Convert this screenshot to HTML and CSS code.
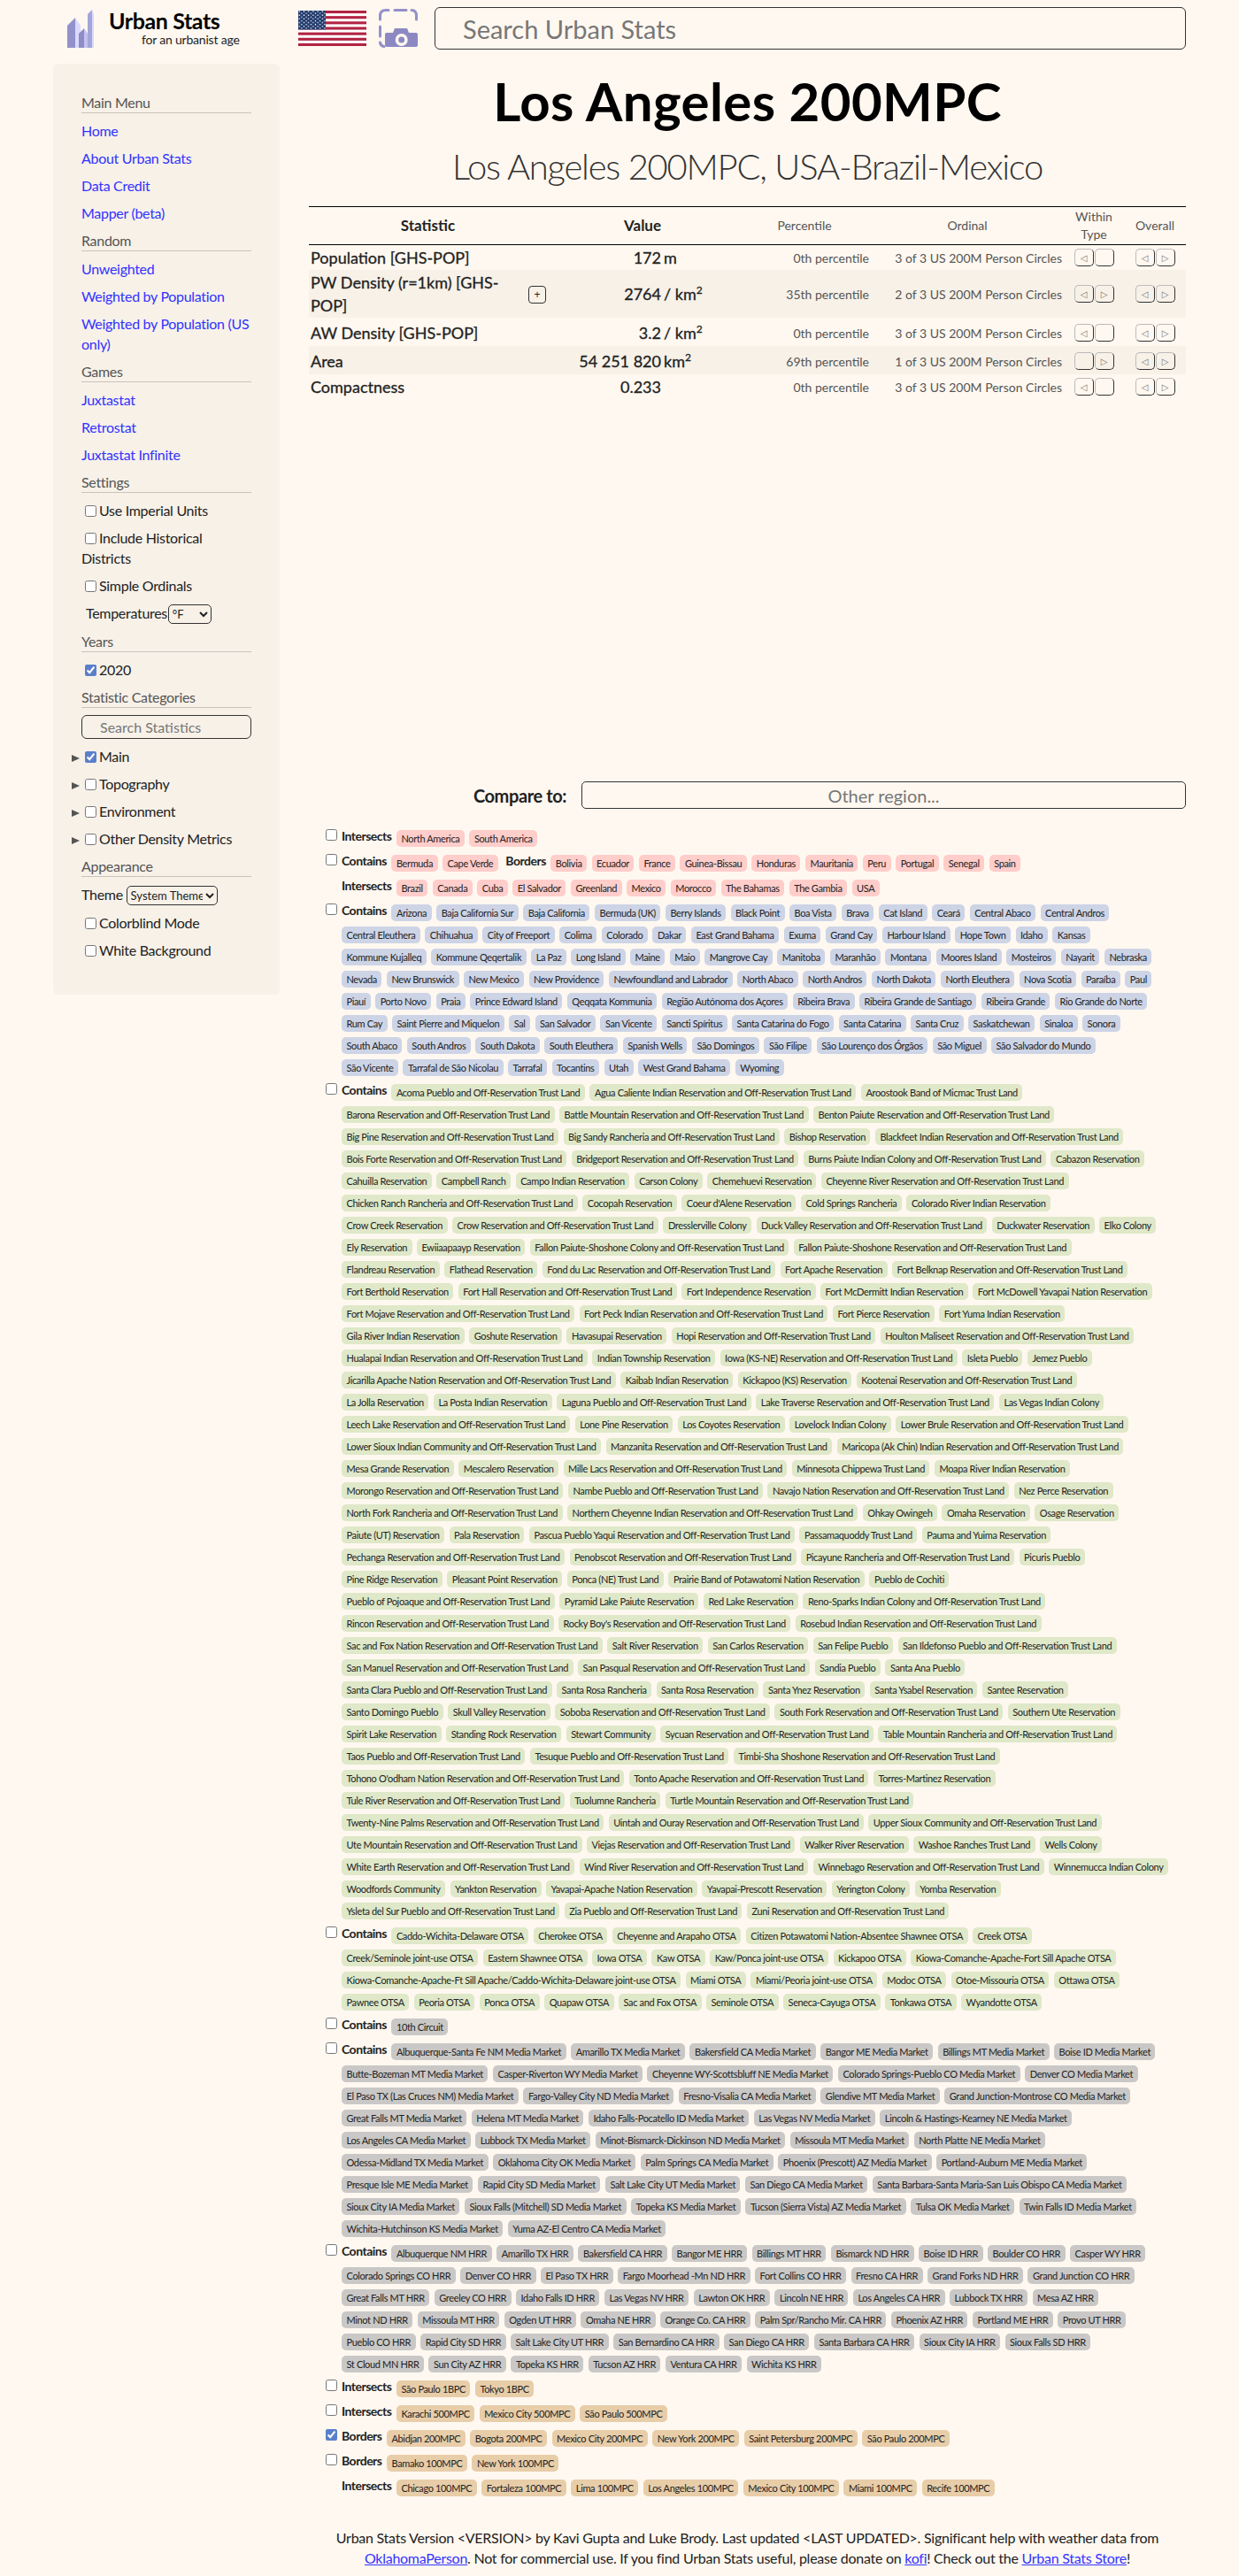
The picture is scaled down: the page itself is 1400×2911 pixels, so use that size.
FILE: index.html
```html
<!DOCTYPE html>
<html lang="en">
<head>
    <meta charset="UTF-8">
    <title>Los Angeles 200MPC - Urban Stats</title>
    <link rel="stylesheet" href="styles.css">
</head>
<body>

<div class="page">
    <!-- Top bar -->
    <div class="top">
        <svg class="logo" viewBox="0 0 31 43" width="31" height="43">
            <polygon points="0,18 9,9 9,43 0,43" fill="#9391cb"/>
            <polygon points="9,9 15,18 15,43 9,43" fill="#d9d9fd"/>
            <polygon points="13,27 19,21 19,43 13,43" fill="#8f8dc6"/>
            <polygon points="19,21 23,27 23,43 19,43" fill="#c3c2f0"/>
            <polygon points="23,5 28,0 28,43 23,43" fill="#a6a5da"/>
            <polygon points="28,0 30,5 30,43 28,43" fill="#d9d9fd"/>
        </svg>
        <div class="brand">
            <div class="brand-name">Urban Stats</div>
            <div class="brand-tag">for an urbanist age</div>
        </div>
        <svg class="flag" viewBox="0 0 77 40" width="77" height="40">
            <defs>
                <pattern id="stars" width="5.2" height="4.2" patternUnits="userSpaceOnUse">
                    <circle cx="1.3" cy="1" r="0.7" fill="#fff"/>
                    <circle cx="3.9" cy="3.1" r="0.7" fill="#fff"/>
                </pattern>
            </defs>
            <rect width="77" height="40" fill="#fff"/>
            <rect y="0" width="77" height="3.08" fill="#b22242"/>
            <rect y="6.15" width="77" height="3.08" fill="#b22242"/>
            <rect y="12.3" width="77" height="3.08" fill="#b22242"/>
            <rect y="18.46" width="77" height="3.08" fill="#b22242"/>
            <rect y="24.6" width="77" height="3.08" fill="#b22242"/>
            <rect y="30.77" width="77" height="3.08" fill="#b22242"/>
            <rect y="36.92" width="77" height="3.08" fill="#b22242"/>
            <rect width="31" height="21.5" fill="#213a6d"/>
            <rect width="31" height="21.5" fill="url(#stars)"/>
        </svg>
        <svg class="camera" viewBox="0 0 45 44" width="45" height="44">
            <g fill="none" stroke="#9390c8" stroke-width="3" stroke-linecap="round">
                <path d="M1.5 12V8Q1.5 1.5 8 1.5H11"/>
                <path d="M18 1.5H31"/>
                <path d="M37 1.5Q42.5 1.5 42.5 8V12"/>
                <path d="M1.5 20V31"/>
                <path d="M1.5 38Q2 42 6 42.5"/>
            </g>
            <path d="M9 27H16L18 22H32L34 27H42Q44 27 44 29V41Q44 43 42 43H9Q7 43 7 41V29Q7 27 9 27Z" fill="#8c89c2"/>
            <circle cx="25.7" cy="35" r="7" fill="#fff8f0"/>
            <circle cx="25.7" cy="35" r="3.5" fill="#8c89c2"/>
        </svg>
        <input class="search" type="text" placeholder="Search Urban Stats">
    </div>

    <div class="layout">
        <!-- Sidebar -->
        <div class="sidebar">
            <div class="side-head">Main Menu</div>
            <div class="side-item"><a href="#">Home</a></div>
            <div class="side-item"><a href="#">About Urban Stats</a></div>
            <div class="side-item"><a href="#">Data Credit</a></div>
            <div class="side-item"><a href="#">Mapper (beta)</a></div>
            <div class="side-head">Random</div>
            <div class="side-item"><a href="#">Unweighted</a></div>
            <div class="side-item"><a href="#">Weighted by Population</a></div>
            <div class="side-item"><a href="#">Weighted by Population (US only)</a></div>
            <div class="side-head">Games</div>
            <div class="side-item"><a href="#">Juxtastat</a></div>
            <div class="side-item"><a href="#">Retrostat</a></div>
            <div class="side-item"><a href="#">Juxtastat Infinite</a></div>
            <div class="side-head">Settings</div>
            <div class="side-item"><input type="checkbox"><label>Use Imperial Units</label></div>
            <div class="side-item"><input type="checkbox"><label>Include Historical Districts</label></div>
            <div class="side-item"><input type="checkbox"><label>Simple Ordinals</label></div>
            <div class="side-item indent"><label>Temperatures</label> <select class="temp"><option>°F</option></select></div>
            <div class="side-head">Years</div>
            <div class="side-item"><input type="checkbox" checked><label>2020</label></div>
            <div class="side-head">Statistic Categories</div>
            <input class="stat-search" type="text" placeholder="Search Statistics">
            <div class="side-item"><span class="arrow"></span><input type="checkbox" checked><label>Main</label></div>
            <div class="side-item"><span class="arrow"></span><input type="checkbox"><label>Topography</label></div>
            <div class="side-item"><span class="arrow"></span><input type="checkbox"><label>Environment</label></div>
            <div class="side-item"><span class="arrow"></span><input type="checkbox"><label>Other Density Metrics</label></div>
            <div class="side-head">Appearance</div>
            <div class="side-item"><label>Theme</label> <select class="theme"><option>System Theme</option></select></div>
            <div class="side-item"><input type="checkbox"><label>Colorblind Mode</label></div>
            <div class="side-item"><input type="checkbox"><label>White Background</label></div>
        </div>

        <!-- Main column -->
        <div class="main">
            <h1>Los Angeles 200MPC</h1>
            <h2>Los Angeles 200MPC, USA-Brazil-Mexico</h2>

            <table class="stats">
                <colgroup>
                    <col class="c-name"><col class="c-btn"><col class="c-num"><col class="c-unit">
                    <col class="c-pct"><col class="c-ord"><col class="c-within"><col class="c-over">
                </colgroup>
                <tr class="head">
                    <th colspan="2">Statistic</th>
                    <th colspan="2">Value</th>
                    <th class="light">Percentile</th>
                    <th class="light">Ordinal</th>
                    <th class="light">Within Type</th>
                    <th class="light">Overall</th>
                </tr>
                <tr class="r-short">
                    <td class="name">Population [GHS-POP]</td><td></td>
                    <td class="num">172</td><td class="unit">m</td>
                    <td class="pct">0th percentile</td><td class="ord">3 of 3 US 200M Person Circles</td>
                    <td class="nav"><button>◁</button><button></button></td>
                    <td class="nav"><button>◁</button><button>▷</button></td>
                </tr>
                <tr class="r-double alt">
                    <td class="name">PW Density (r=1km) [GHS-POP]</td><td><button class="plus">+</button></td>
                    <td class="num">2764</td><td class="unit">/ km<sup>2</sup></td>
                    <td class="pct">35th percentile</td><td class="ord">2 of 3 US 200M Person Circles</td>
                    <td class="nav"><button>◁</button><button>▷</button></td>
                    <td class="nav"><button>◁</button><button>▷</button></td>
                </tr>
                <tr class="r-tall">
                    <td class="name">AW Density [GHS-POP]</td><td></td>
                    <td class="num">3.2</td><td class="unit">/ km<sup>2</sup></td>
                    <td class="pct">0th percentile</td><td class="ord">3 of 3 US 200M Person Circles</td>
                    <td class="nav"><button>◁</button><button></button></td>
                    <td class="nav"><button>◁</button><button>▷</button></td>
                </tr>
                <tr class="r-tall alt">
                    <td class="name">Area</td><td></td>
                    <td class="num">54 251 820</td><td class="unit">km<sup>2</sup></td>
                    <td class="pct">69th percentile</td><td class="ord">1 of 3 US 200M Person Circles</td>
                    <td class="nav"><button></button><button>▷</button></td>
                    <td class="nav"><button>◁</button><button>▷</button></td>
                </tr>
                <tr class="r-short">
                    <td class="name">Compactness</td><td></td>
                    <td class="num">0.233</td><td class="unit"></td>
                    <td class="pct">0th percentile</td><td class="ord">3 of 3 US 200M Person Circles</td>
                    <td class="nav"><button>◁</button><button></button></td>
                    <td class="nav"><button>◁</button><button>▷</button></td>
                </tr>
            </table>

            <!-- Map area, nothing drawn without the tiles -->
            <div class="map"></div>

            <div class="compare">
                <span class="compare-label">Compare to:</span>
                <input class="compare-box" type="text" placeholder="Other region...">
            </div>

            <div class="related">
                <div class="group red">
                    <div class="tags"><input type="checkbox"><b>Intersects</b><a>North America</a><a>South America</a></div>
                </div>
                <div class="group red">
                    <div class="tags"><input type="checkbox"><b>Contains</b><a>Bermuda</a><a>Cape Verde</a><b class="mid">Borders</b><a>Bolivia</a><a>Ecuador</a><a>France</a><a>Guinea-Bissau</a><a>Honduras</a><a>Mauritania</a><a>Peru</a><a>Portugal</a><a>Senegal</a><a>Spain</a></div>
                </div>
                <div class="group red">
                    <div class="tags"><b>Intersects</b><a>Brazil</a><a>Canada</a><a>Cuba</a><a>El Salvador</a><a>Greenland</a><a>Mexico</a><a>Morocco</a><a>The Bahamas</a><a>The Gambia</a><a>USA</a></div>
                </div>
                <div class="group blue">
                    <div class="tags"><input type="checkbox"><b>Contains</b><a>Arizona</a><a>Baja California Sur</a><a>Baja California</a><a>Bermuda (UK)</a><a>Berry Islands</a><a>Black Point</a><a>Boa Vista</a><a>Brava</a><a>Cat Island</a><a>Ceará</a><a>Central Abaco</a><a>Central Andros</a></div>
                    <div class="tags"><a>Central Eleuthera</a><a>Chihuahua</a><a>City of Freeport</a><a>Colima</a><a>Colorado</a><a>Dakar</a><a>East Grand Bahama</a><a>Exuma</a><a>Grand Cay</a><a>Harbour Island</a><a>Hope Town</a><a>Idaho</a><a>Kansas</a></div>
                    <div class="tags"><a>Kommune Kujalleq</a><a>Kommune Qeqertalik</a><a>La Paz</a><a>Long Island</a><a>Maine</a><a>Maio</a><a>Mangrove Cay</a><a>Manitoba</a><a>Maranhão</a><a>Montana</a><a>Moores Island</a><a>Mosteiros</a><a>Nayarit</a><a>Nebraska</a></div>
                    <div class="tags"><a>Nevada</a><a>New Brunswick</a><a>New Mexico</a><a>New Providence</a><a>Newfoundland and Labrador</a><a>North Abaco</a><a>North Andros</a><a>North Dakota</a><a>North Eleuthera</a><a>Nova Scotia</a><a>Paraíba</a><a>Paul</a></div>
                    <div class="tags"><a>Piauí</a><a>Porto Novo</a><a>Praia</a><a>Prince Edward Island</a><a>Qeqqata Kommunia</a><a>Região Autónoma dos Açores</a><a>Ribeira Brava</a><a>Ribeira Grande de Santiago</a><a>Ribeira Grande</a><a>Rio Grande do Norte</a></div>
                    <div class="tags"><a>Rum Cay</a><a>Saint Pierre and Miquelon</a><a>Sal</a><a>San Salvador</a><a>San Vicente</a><a>Sancti Spíritus</a><a>Santa Catarina do Fogo</a><a>Santa Catarina</a><a>Santa Cruz</a><a>Saskatchewan</a><a>Sinaloa</a><a>Sonora</a></div>
                    <div class="tags"><a>South Abaco</a><a>South Andros</a><a>South Dakota</a><a>South Eleuthera</a><a>Spanish Wells</a><a>São Domingos</a><a>São Filipe</a><a>São Lourenço dos Órgãos</a><a>São Miguel</a><a>São Salvador do Mundo</a></div>
                    <div class="tags"><a>São Vicente</a><a>Tarrafal de São Nicolau</a><a>Tarrafal</a><a>Tocantins</a><a>Utah</a><a>West Grand Bahama</a><a>Wyoming</a></div>
                </div>
                <div class="group green">
                    <div class="tags"><input type="checkbox"><b>Contains</b><a>Acoma Pueblo and Off-Reservation Trust Land</a><a>Agua Caliente Indian Reservation and Off-Reservation Trust Land</a><a>Aroostook Band of Micmac Trust Land</a></div>
                    <div class="tags"><a>Barona Reservation and Off-Reservation Trust Land</a><a>Battle Mountain Reservation and Off-Reservation Trust Land</a><a>Benton Paiute Reservation and Off-Reservation Trust Land</a></div>
                    <div class="tags"><a>Big Pine Reservation and Off-Reservation Trust Land</a><a>Big Sandy Rancheria and Off-Reservation Trust Land</a><a>Bishop Reservation</a><a>Blackfeet Indian Reservation and Off-Reservation Trust Land</a></div>
                    <div class="tags"><a>Bois Forte Reservation and Off-Reservation Trust Land</a><a>Bridgeport Reservation and Off-Reservation Trust Land</a><a>Burns Paiute Indian Colony and Off-Reservation Trust Land</a><a>Cabazon Reservation</a></div>
                    <div class="tags"><a>Cahuilla Reservation</a><a>Campbell Ranch</a><a>Campo Indian Reservation</a><a>Carson Colony</a><a>Chemehuevi Reservation</a><a>Cheyenne River Reservation and Off-Reservation Trust Land</a></div>
                    <div class="tags"><a>Chicken Ranch Rancheria and Off-Reservation Trust Land</a><a>Cocopah Reservation</a><a>Coeur d'Alene Reservation</a><a>Cold Springs Rancheria</a><a>Colorado River Indian Reservation</a></div>
                    <div class="tags"><a>Crow Creek Reservation</a><a>Crow Reservation and Off-Reservation Trust Land</a><a>Dresslerville Colony</a><a>Duck Valley Reservation and Off-Reservation Trust Land</a><a>Duckwater Reservation</a><a>Elko Colony</a></div>
                    <div class="tags"><a>Ely Reservation</a><a>Ewiiaapaayp Reservation</a><a>Fallon Paiute-Shoshone Colony and Off-Reservation Trust Land</a><a>Fallon Paiute-Shoshone Reservation and Off-Reservation Trust Land</a></div>
                    <div class="tags"><a>Flandreau Reservation</a><a>Flathead Reservation</a><a>Fond du Lac Reservation and Off-Reservation Trust Land</a><a>Fort Apache Reservation</a><a>Fort Belknap Reservation and Off-Reservation Trust Land</a></div>
                    <div class="tags"><a>Fort Berthold Reservation</a><a>Fort Hall Reservation and Off-Reservation Trust Land</a><a>Fort Independence Reservation</a><a>Fort McDermitt Indian Reservation</a><a>Fort McDowell Yavapai Nation Reservation</a></div>
                    <div class="tags"><a>Fort Mojave Reservation and Off-Reservation Trust Land</a><a>Fort Peck Indian Reservation and Off-Reservation Trust Land</a><a>Fort Pierce Reservation</a><a>Fort Yuma Indian Reservation</a></div>
                    <div class="tags"><a>Gila River Indian Reservation</a><a>Goshute Reservation</a><a>Havasupai Reservation</a><a>Hopi Reservation and Off-Reservation Trust Land</a><a>Houlton Maliseet Reservation and Off-Reservation Trust Land</a></div>
                    <div class="tags"><a>Hualapai Indian Reservation and Off-Reservation Trust Land</a><a>Indian Township Reservation</a><a>Iowa (KS-NE) Reservation and Off-Reservation Trust Land</a><a>Isleta Pueblo</a><a>Jemez Pueblo</a></div>
                    <div class="tags"><a>Jicarilla Apache Nation Reservation and Off-Reservation Trust Land</a><a>Kaibab Indian Reservation</a><a>Kickapoo (KS) Reservation</a><a>Kootenai Reservation and Off-Reservation Trust Land</a></div>
                    <div class="tags"><a>La Jolla Reservation</a><a>La Posta Indian Reservation</a><a>Laguna Pueblo and Off-Reservation Trust Land</a><a>Lake Traverse Reservation and Off-Reservation Trust Land</a><a>Las Vegas Indian Colony</a></div>
                    <div class="tags"><a>Leech Lake Reservation and Off-Reservation Trust Land</a><a>Lone Pine Reservation</a><a>Los Coyotes Reservation</a><a>Lovelock Indian Colony</a><a>Lower Brule Reservation and Off-Reservation Trust Land</a></div>
                    <div class="tags"><a>Lower Sioux Indian Community and Off-Reservation Trust Land</a><a>Manzanita Reservation and Off-Reservation Trust Land</a><a>Maricopa (Ak Chin) Indian Reservation and Off-Reservation Trust Land</a></div>
                    <div class="tags"><a>Mesa Grande Reservation</a><a>Mescalero Reservation</a><a>Mille Lacs Reservation and Off-Reservation Trust Land</a><a>Minnesota Chippewa Trust Land</a><a>Moapa River Indian Reservation</a></div>
                    <div class="tags"><a>Morongo Reservation and Off-Reservation Trust Land</a><a>Nambe Pueblo and Off-Reservation Trust Land</a><a>Navajo Nation Reservation and Off-Reservation Trust Land</a><a>Nez Perce Reservation</a></div>
                    <div class="tags"><a>North Fork Rancheria and Off-Reservation Trust Land</a><a>Northern Cheyenne Indian Reservation and Off-Reservation Trust Land</a><a>Ohkay Owingeh</a><a>Omaha Reservation</a><a>Osage Reservation</a></div>
                    <div class="tags"><a>Paiute (UT) Reservation</a><a>Pala Reservation</a><a>Pascua Pueblo Yaqui Reservation and Off-Reservation Trust Land</a><a>Passamaquoddy Trust Land</a><a>Pauma and Yuima Reservation</a></div>
                    <div class="tags"><a>Pechanga Reservation and Off-Reservation Trust Land</a><a>Penobscot Reservation and Off-Reservation Trust Land</a><a>Picayune Rancheria and Off-Reservation Trust Land</a><a>Picuris Pueblo</a></div>
                    <div class="tags"><a>Pine Ridge Reservation</a><a>Pleasant Point Reservation</a><a>Ponca (NE) Trust Land</a><a>Prairie Band of Potawatomi Nation Reservation</a><a>Pueblo de Cochiti</a></div>
                    <div class="tags"><a>Pueblo of Pojoaque and Off-Reservation Trust Land</a><a>Pyramid Lake Paiute Reservation</a><a>Red Lake Reservation</a><a>Reno-Sparks Indian Colony and Off-Reservation Trust Land</a></div>
                    <div class="tags"><a>Rincon Reservation and Off-Reservation Trust Land</a><a>Rocky Boy's Reservation and Off-Reservation Trust Land</a><a>Rosebud Indian Reservation and Off-Reservation Trust Land</a></div>
                    <div class="tags"><a>Sac and Fox Nation Reservation and Off-Reservation Trust Land</a><a>Salt River Reservation</a><a>San Carlos Reservation</a><a>San Felipe Pueblo</a><a>San Ildefonso Pueblo and Off-Reservation Trust Land</a></div>
                    <div class="tags"><a>San Manuel Reservation and Off-Reservation Trust Land</a><a>San Pasqual Reservation and Off-Reservation Trust Land</a><a>Sandia Pueblo</a><a>Santa Ana Pueblo</a></div>
                    <div class="tags"><a>Santa Clara Pueblo and Off-Reservation Trust Land</a><a>Santa Rosa Rancheria</a><a>Santa Rosa Reservation</a><a>Santa Ynez Reservation</a><a>Santa Ysabel Reservation</a><a>Santee Reservation</a></div>
                    <div class="tags"><a>Santo Domingo Pueblo</a><a>Skull Valley Reservation</a><a>Soboba Reservation and Off-Reservation Trust Land</a><a>South Fork Reservation and Off-Reservation Trust Land</a><a>Southern Ute Reservation</a></div>
                    <div class="tags"><a>Spirit Lake Reservation</a><a>Standing Rock Reservation</a><a>Stewart Community</a><a>Sycuan Reservation and Off-Reservation Trust Land</a><a>Table Mountain Rancheria and Off-Reservation Trust Land</a></div>
                    <div class="tags"><a>Taos Pueblo and Off-Reservation Trust Land</a><a>Tesuque Pueblo and Off-Reservation Trust Land</a><a>Timbi-Sha Shoshone Reservation and Off-Reservation Trust Land</a></div>
                    <div class="tags"><a>Tohono O'odham Nation Reservation and Off-Reservation Trust Land</a><a>Tonto Apache Reservation and Off-Reservation Trust Land</a><a>Torres-Martinez Reservation</a></div>
                    <div class="tags"><a>Tule River Reservation and Off-Reservation Trust Land</a><a>Tuolumne Rancheria</a><a>Turtle Mountain Reservation and Off-Reservation Trust Land</a></div>
                    <div class="tags"><a>Twenty-Nine Palms Reservation and Off-Reservation Trust Land</a><a>Uintah and Ouray Reservation and Off-Reservation Trust Land</a><a>Upper Sioux Community and Off-Reservation Trust Land</a></div>
                    <div class="tags"><a>Ute Mountain Reservation and Off-Reservation Trust Land</a><a>Viejas Reservation and Off-Reservation Trust Land</a><a>Walker River Reservation</a><a>Washoe Ranches Trust Land</a><a>Wells Colony</a></div>
                    <div class="tags"><a>White Earth Reservation and Off-Reservation Trust Land</a><a>Wind River Reservation and Off-Reservation Trust Land</a><a>Winnebago Reservation and Off-Reservation Trust Land</a><a>Winnemucca Indian Colony</a></div>
                    <div class="tags"><a>Woodfords Community</a><a>Yankton Reservation</a><a>Yavapai-Apache Nation Reservation</a><a>Yavapai-Prescott Reservation</a><a>Yerington Colony</a><a>Yomba Reservation</a></div>
                    <div class="tags"><a>Ysleta del Sur Pueblo and Off-Reservation Trust Land</a><a>Zia Pueblo and Off-Reservation Trust Land</a><a>Zuni Reservation and Off-Reservation Trust Land</a></div>
                </div>
                <div class="group green">
                    <div class="tags"><input type="checkbox"><b>Contains</b><a>Caddo-Wichita-Delaware OTSA</a><a>Cherokee OTSA</a><a>Cheyenne and Arapaho OTSA</a><a>Citizen Potawatomi Nation-Absentee Shawnee OTSA</a><a>Creek OTSA</a></div>
                    <div class="tags"><a>Creek/Seminole joint-use OTSA</a><a>Eastern Shawnee OTSA</a><a>Iowa OTSA</a><a>Kaw OTSA</a><a>Kaw/Ponca joint-use OTSA</a><a>Kickapoo OTSA</a><a>Kiowa-Comanche-Apache-Fort Sill Apache OTSA</a></div>
                    <div class="tags"><a>Kiowa-Comanche-Apache-Ft Sill Apache/Caddo-Wichita-Delaware joint-use OTSA</a><a>Miami OTSA</a><a>Miami/Peoria joint-use OTSA</a><a>Modoc OTSA</a><a>Otoe-Missouria OTSA</a><a>Ottawa OTSA</a></div>
                    <div class="tags"><a>Pawnee OTSA</a><a>Peoria OTSA</a><a>Ponca OTSA</a><a>Quapaw OTSA</a><a>Sac and Fox OTSA</a><a>Seminole OTSA</a><a>Seneca-Cayuga OTSA</a><a>Tonkawa OTSA</a><a>Wyandotte OTSA</a></div>
                </div>
                <div class="group gray">
                    <div class="tags"><input type="checkbox"><b>Contains</b><a>10th Circuit</a></div>
                </div>
                <div class="group gray">
                    <div class="tags"><input type="checkbox"><b>Contains</b><a>Albuquerque-Santa Fe NM Media Market</a><a>Amarillo TX Media Market</a><a>Bakersfield CA Media Market</a><a>Bangor ME Media Market</a><a>Billings MT Media Market</a><a>Boise ID Media Market</a></div>
                    <div class="tags"><a>Butte-Bozeman MT Media Market</a><a>Casper-Riverton WY Media Market</a><a>Cheyenne WY-Scottsbluff NE Media Market</a><a>Colorado Springs-Pueblo CO Media Market</a><a>Denver CO Media Market</a></div>
                    <div class="tags"><a>El Paso TX (Las Cruces NM) Media Market</a><a>Fargo-Valley City ND Media Market</a><a>Fresno-Visalia CA Media Market</a><a>Glendive MT Media Market</a><a>Grand Junction-Montrose CO Media Market</a></div>
                    <div class="tags"><a>Great Falls MT Media Market</a><a>Helena MT Media Market</a><a>Idaho Falls-Pocatello ID Media Market</a><a>Las Vegas NV Media Market</a><a>Lincoln &amp; Hastings-Kearney NE Media Market</a></div>
                    <div class="tags"><a>Los Angeles CA Media Market</a><a>Lubbock TX Media Market</a><a>Minot-Bismarck-Dickinson ND Media Market</a><a>Missoula MT Media Market</a><a>North Platte NE Media Market</a></div>
                    <div class="tags"><a>Odessa-Midland TX Media Market</a><a>Oklahoma City OK Media Market</a><a>Palm Springs CA Media Market</a><a>Phoenix (Prescott) AZ Media Market</a><a>Portland-Auburn ME Media Market</a></div>
                    <div class="tags"><a>Presque Isle ME Media Market</a><a>Rapid City SD Media Market</a><a>Salt Lake City UT Media Market</a><a>San Diego CA Media Market</a><a>Santa Barbara-Santa Maria-San Luis Obispo CA Media Market</a></div>
                    <div class="tags"><a>Sioux City IA Media Market</a><a>Sioux Falls (Mitchell) SD Media Market</a><a>Topeka KS Media Market</a><a>Tucson (Sierra Vista) AZ Media Market</a><a>Tulsa OK Media Market</a><a>Twin Falls ID Media Market</a></div>
                    <div class="tags"><a>Wichita-Hutchinson KS Media Market</a><a>Yuma AZ-El Centro CA Media Market</a></div>
                </div>
                <div class="group gray">
                    <div class="tags"><input type="checkbox"><b>Contains</b><a>Albuquerque NM HRR</a><a>Amarillo TX HRR</a><a>Bakersfield CA HRR</a><a>Bangor ME HRR</a><a>Billings MT HRR</a><a>Bismarck ND HRR</a><a>Boise ID HRR</a><a>Boulder CO HRR</a><a>Casper WY HRR</a></div>
                    <div class="tags"><a>Colorado Springs CO HRR</a><a>Denver CO HRR</a><a>El Paso TX HRR</a><a>Fargo Moorhead -Mn ND HRR</a><a>Fort Collins CO HRR</a><a>Fresno CA HRR</a><a>Grand Forks ND HRR</a><a>Grand Junction CO HRR</a></div>
                    <div class="tags"><a>Great Falls MT HRR</a><a>Greeley CO HRR</a><a>Idaho Falls ID HRR</a><a>Las Vegas NV HRR</a><a>Lawton OK HRR</a><a>Lincoln NE HRR</a><a>Los Angeles CA HRR</a><a>Lubbock TX HRR</a><a>Mesa AZ HRR</a></div>
                    <div class="tags"><a>Minot ND HRR</a><a>Missoula MT HRR</a><a>Ogden UT HRR</a><a>Omaha NE HRR</a><a>Orange Co. CA HRR</a><a>Palm Spr/Rancho Mir. CA HRR</a><a>Phoenix AZ HRR</a><a>Portland ME HRR</a><a>Provo UT HRR</a></div>
                    <div class="tags"><a>Pueblo CO HRR</a><a>Rapid City SD HRR</a><a>Salt Lake City UT HRR</a><a>San Bernardino CA HRR</a><a>San Diego CA HRR</a><a>Santa Barbara CA HRR</a><a>Sioux City IA HRR</a><a>Sioux Falls SD HRR</a></div>
                    <div class="tags"><a>St Cloud MN HRR</a><a>Sun City AZ HRR</a><a>Topeka KS HRR</a><a>Tucson AZ HRR</a><a>Ventura CA HRR</a><a>Wichita KS HRR</a></div>
                </div>
                <div class="group orange">
                    <div class="tags"><input type="checkbox"><b>Intersects</b><a>São Paulo 1BPC</a><a>Tokyo 1BPC</a></div>
                </div>
                <div class="group orange">
                    <div class="tags"><input type="checkbox"><b>Intersects</b><a>Karachi 500MPC</a><a>Mexico City 500MPC</a><a>São Paulo 500MPC</a></div>
                </div>
                <div class="group orange">
                    <div class="tags"><input type="checkbox" checked><b>Borders</b><a>Abidjan 200MPC</a><a>Bogota 200MPC</a><a>Mexico City 200MPC</a><a>New York 200MPC</a><a>Saint Petersburg 200MPC</a><a>São Paulo 200MPC</a></div>
                </div>
                <div class="group orange">
                    <div class="tags"><input type="checkbox"><b>Borders</b><a>Bamako 100MPC</a><a>New York 100MPC</a></div>
                </div>
                <div class="group orange">
                    <div class="tags"><b>Intersects</b><a>Chicago 100MPC</a><a>Fortaleza 100MPC</a><a>Lima 100MPC</a><a>Los Angeles 100MPC</a><a>Mexico City 100MPC</a><a>Miami 100MPC</a><a>Recife 100MPC</a></div>
                </div>
            </div>

            <div class="footer">
                Urban Stats Version &lt;VERSION&gt; by Kavi Gupta and Luke Brody. Last updated &lt;LAST UPDATED&gt;. Significant help with weather data from<br>
                <a href="#">OklahomaPerson</a>. Not for commercial use. If you find Urban Stats useful, please donate on <a href="#">kofi</a>! Check out the <a href="#">Urban Stats Store</a>!
            </div>
        </div>
    </div>
</div>

</body>
</html>
```

FILE: styles.css
```css
/* Page */
body {
    margin: 0;
    background-color: #fff8f0;
    color: #222;
    font-family: "Lato", "Liberation Sans", sans-serif;
}

.page {
    padding: 8px 60px 0;
}

/* Top bar */
.top {
    display: flex;
    align-items: center;
    height: 48px;
}

.logo {
    margin-left: 16px;
    flex: none;
}

.brand {
    margin: -2px 0 0 16px;
    width: 214px;
    flex: none;
}

.brand-name {
    font-size: 25px;
    font-weight: 700;
    line-height: 28px;
    color: #000;
    letter-spacing: -0.4px;
}

.brand-tag {
    font-size: 14px;
    line-height: 16px;
    padding-left: 37px;
    letter-spacing: -0.2px;
}

.flag {
    flex: none;
}

.camera {
    margin-left: 14px;
    flex: none;
}

.search {
    flex: 1;
    margin-left: 18px;
    height: 48px;
    box-sizing: border-box;
    border: 1px solid #333;
    border-radius: 6px;
    background: transparent;
    padding: 0 31px;
    font-family: inherit;
    font-size: 29px;
}

.search::placeholder, .stat-search::placeholder, .compare-box::placeholder {
    color: #777;
    opacity: 1;
}

.layout {
    display: flex;
    margin-top: 16px;
}

/* Sidebar */
.sidebar {
    flex: none;
    width: 256px;
    box-sizing: border-box;
    padding: 32px;
    height: 1052px;
    background-color: #f7f1e8;
    border-radius: 6px;
    font-size: 16px;
    line-height: 23px;
    letter-spacing: -0.3px;
}

.side-head {
    color: #555;
    height: 23px;
    border-bottom: 1px solid #c8c4bd;
    margin-bottom: 8px;
}

.side-item {
    margin-bottom: 8px;
}

.side-item a {
    color: #3333ff;
    text-decoration: none;
}

.side-item input {
    margin: 0 3px 0 4px;
    vertical-align: -1px;
    accent-color: #5a7fcb;
}

.indent {
    padding-left: 5px;
}

.temp, .theme {
    height: 22px;
    background: transparent;
    border: 1px solid #333;
    border-radius: 5px;
    font-family: inherit;
    font-size: 13px;
    color: #222;
}

.temp {
    width: 49px;
    margin-left: -3px;
}

.theme {
    width: 103px;
}

.stat-search {
    display: block;
    width: 100%;
    height: 27px;
    box-sizing: border-box;
    margin-bottom: 8px;
    border: 1px solid #333;
    border-radius: 6px;
    background: transparent;
    padding: 0 0 0 20px;
    font-family: inherit;
    font-size: 16px;
}

.arrow {
    display: inline-block;
    margin: 0 2px 0 -11px;
    border-left: 9px solid #555;
    border-top: 4px solid transparent;
    border-bottom: 4px solid transparent;
}

/* Main column */
.main {
    flex: none;
    width: 991px;
    margin-left: 33px;
}

h1 {
    margin: 0;
    padding-top: 2px;
    text-align: center;
    font-size: 60px;
    line-height: 80px;
    font-weight: 700;
    letter-spacing: 0.4px;
    color: #000;
}

h2 {
    margin: 10px 0 0;
    text-align: center;
    font-size: 40px;
    line-height: 48px;
    font-weight: 300;
    letter-spacing: -1.25px;
    color: #333;
    padding-bottom: 21px;
}

/* Stats table */
.stats {
    width: 991px;
    table-layout: fixed;
    border-collapse: collapse;
    border-top: 1px solid #000;
}

.c-name { width: 241px; }
.c-btn { width: 28px; }
.c-num { width: 129px; }
.c-unit { width: 87px; }
.c-pct { width: 150px; }
.c-ord { width: 218px; }
.c-within { width: 68px; }
.c-over { width: 70px; }

.stats th {
    height: 42px;
    padding: 0;
    font-size: 17px;
    font-weight: 700;
    line-height: 20px;
    border-bottom: 1px solid #000;
}

.stats th.light {
    font-size: 14px;
    font-weight: 400;
    color: #555;
}

.stats td {
    padding: 0;
}

.alt {
    background-color: #f7f1e8;
}

.r-short td { height: 28px; }
.r-tall td { height: 32px; padding-top: 2px; box-sizing: border-box; }
.r-double td { height: 54px; }

.name {
    font-size: 18px;
    line-height: 26px;
    padding-left: 2px !important;
    -webkit-text-stroke: 0.3px #222;
}

.num {
    text-align: right;
    font-size: 18px;
    -webkit-text-stroke: 0.3px #222;
}

.unit {
    padding-left: 3px !important;
    font-size: 18px;
    white-space: nowrap;
    -webkit-text-stroke: 0.3px #222;
}

.unit sup {
    font-size: 12px;
    line-height: 0;
}

.pct, .ord {
    text-align: right;
    font-size: 14px;
    color: #555;
    padding-right: 2px !important;
    white-space: nowrap;
}

.nav {
    text-align: center;
    font-size: 0;
}

.nav button {
    width: 22px;
    height: 20px;
    padding: 0;
    margin: 0 0.5px;
    vertical-align: middle;
    background: transparent;
    border: 1px solid #333;
    border-top-color: #bbb;
    border-left-color: #bbb;
    border-radius: 5px;
    font-family: "DejaVu Sans", sans-serif;
    font-size: 10px;
    color: #777;
}

.plus {
    width: 20px;
    height: 20px;
    margin-left: 7px;
    padding: 0;
    background: transparent;
    border: 1px solid #333;
    border-radius: 4px;
    font-size: 12px;
    line-height: 16px;
    color: #222;
}

.map {
    height: 432px;
}

/* Compare */
.compare {
    display: flex;
    align-items: center;
}

.compare-label {
    width: 291px;
    text-align: right;
    font-size: 20px;
    font-weight: 700;
    letter-spacing: -0.4px;
}

.compare-box {
    flex: 1;
    height: 31px;
    margin-left: 17px;
    box-sizing: border-box;
    border: 1px solid #333;
    border-radius: 5px;
    background: transparent;
    text-align: center;
    font-family: inherit;
    font-size: 20px;
}

/* Related regions */
.related {
    margin-top: 24px;
}

.group {
    padding-left: 37px;
    margin-bottom: 9px;
}

.tags {
    display: flex;
    white-space: nowrap;
    gap: 5.5px;
    margin-bottom: 6px;
}

.tags:last-child {
    margin-bottom: 0;
}

.tags input {
    flex: none;
    width: 13px;
    height: 13px;
    margin: -1px -0.5px 0 -18px;
    accent-color: #5a7fcb;
}

.tags b {
    font-size: 14px;
    font-weight: 700;
    line-height: 16px;
    margin-top: -1px;
    letter-spacing: -0.5px;
}

.tags .mid {
    margin-left: 3px;
}

.tags a {
    height: 19px;
    line-height: 19px;
    padding: 0 5.5px;
    border-radius: 5px;
    font-size: 11px;
    letter-spacing: -0.36px;
    color: #222;
}

.red a { background-color: #ffcdca; }
.blue a { background-color: #cdd4e6; }
.green a { background-color: #dfe8c8; }
.gray a { background-color: #cac8c6; }
.orange a { background-color: #e8cda9; }

/* Footer */
.footer {
    margin-top: 35px;
    text-align: center;
    font-size: 16px;
    line-height: 23px;
    letter-spacing: -0.26px;
    white-space: nowrap;
}

.footer a {
    color: #3333ff;
}
```
